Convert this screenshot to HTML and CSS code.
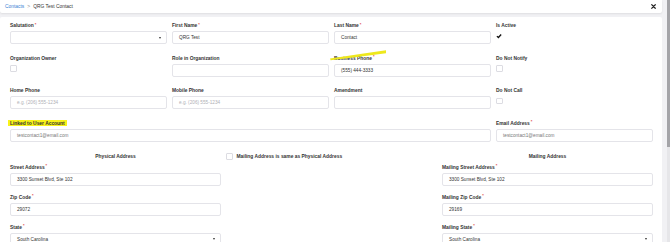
FILE: index.html
```html
<!DOCTYPE html>
<html lang="en">
<head>
    <meta charset="UTF-8">
    <meta name="viewport" content="width=device-width, initial-scale=1.0">
    <title>QRG Test Contact</title>
    <link rel="stylesheet" href="styles.css">
</head>
<body>

<div class="app">
    <main class="page">
        <header class="topbar">
            <nav class="crumbs">
                <a href="#">Contacts</a>
                <span class="sep">&gt;</span>
                <span>QRG Test Contact</span>
            </nav>
            <button class="close" type="button" aria-label="Close">
                <svg viewBox="0 0 10 10" width="5" height="5"><path d="M1.5 1.5 L8.5 8.5 M8.5 1.5 L1.5 8.5" stroke="#222" stroke-width="2.4" stroke-linecap="square"/></svg>
            </button>
        </header>

        <section class="card">
            <div class="grid4">
                <div class="field">
                    <label>Salutation<sup>*</sup></label>
                    <div class="input select"><span></span><i class="caret"></i></div>
                </div>
                <div class="field">
                    <label>First Name<sup>*</sup></label>
                    <div class="input">QRG Test</div>
                </div>
                <div class="field">
                    <label>Last Name<sup>*</sup></label>
                    <div class="input">Contact</div>
                </div>
                <div class="field">
                    <label>Is Active</label>
                    <span class="check checked">
                        <svg viewBox="0 0 10 10" width="6" height="6"><path d="M1.5 5.2 L4 7.6 L8.6 2.6" fill="none" stroke="#111" stroke-width="2.2"/></svg>
                    </span>
                </div>

                <div class="field">
                    <label>Organization Owner</label>
                    <span class="check"></span>
                </div>
                <div class="field">
                    <label>Role in Organization</label>
                    <div class="input"></div>
                </div>
                <div class="field">
                    <label>Business Phone<sup>*</sup></label>
                    <div class="input">(555) 444-3333</div>
                </div>
                <div class="field">
                    <label>Do Not Notify</label>
                    <span class="check"></span>
                </div>

                <div class="field">
                    <label>Home Phone</label>
                    <div class="input placeholder">e.g. (206) 555-1234</div>
                </div>
                <div class="field">
                    <label>Mobile Phone</label>
                    <div class="input placeholder">e.g. (206) 555-1234</div>
                </div>
                <div class="field">
                    <label>Amendment</label>
                    <div class="input"></div>
                </div>
                <div class="field">
                    <label>Do Not Call</label>
                    <span class="check"></span>
                </div>

                <div class="field wide">
                    <label><mark>Linked to User Account</mark></label>
                    <div class="input muted">testcontact1@email.com</div>
                </div>
                <div class="field">
                    <label>Email Address<sup>*</sup></label>
                    <div class="input muted">testcontact1@email.com</div>
                </div>
            </div>

            <div class="addr-head">
                <h3>Physical Address</h3>
                <div class="same">
                    <span class="check"></span>
                    <span>Mailing Address is same as Physical Address</span>
                </div>
                <h3>Mailing Address</h3>
            </div>

            <div class="addr">
                <div class="field col-left">
                    <label>Street Address<sup>*</sup></label>
                    <div class="input">3300 Sunset Blvd, Ste 102</div>
                </div>
                <div class="field col-right">
                    <label>Mailing Street Address<sup>*</sup></label>
                    <div class="input">3300 Sunset Blvd, Ste 102</div>
                </div>
                <div class="field col-left">
                    <label>Zip Code<sup>*</sup></label>
                    <div class="input">29072</div>
                </div>
                <div class="field col-right">
                    <label>Mailing Zip Code<sup>*</sup></label>
                    <div class="input">29169</div>
                </div>
                <div class="field col-left">
                    <label>State<sup>*</sup></label>
                    <div class="input select"><span>South Carolina</span><i class="caret"></i></div>
                </div>
                <div class="field col-right">
                    <label>Mailing State<sup>*</sup></label>
                    <div class="input select"><span>South Carolina</span><i class="caret"></i></div>
                </div>
            </div>
        </section>
    </main>

    <div class="scrollbar"><div class="thumb"></div></div>
</div>

<!-- highlighter stroke drawn over the Business Phone label -->
<svg class="marker" width="70" height="16" viewBox="0 0 70 16">
    <path d="M2 10.5 Q28 6.5 58 2.2 L58 5.2 Q30 9 2.6 12.2 Z" fill="#eee81c"/>
</svg>

</body>
</html>
```

FILE: styles.css
```css
body {
    margin: 0;
    padding: 0;
    background-color: #f1f1f4;
    font-family: "Liberation Sans", Arial, sans-serif;
    color: #333;
    overflow: hidden;
}

.app {
    display: flex;
    height: 242px;
    overflow: hidden;
}

.page {
    width: 662px;
    display: flex;
    flex-direction: column;
    gap: 4px;
}

.topbar {
    flex-shrink: 0;
    height: 13px;
    background-color: white;
    border-radius: 0 0 2px 2px;
    box-shadow: 0 1px 2px rgba(0, 0, 0, 0.08);
    display: flex;
    align-items: center;
    justify-content: space-between;
    padding: 0 6px 0 5px;
}

.crumbs {
    font-size: 4.9px;
    display: flex;
    gap: 3px;
    color: #333;
}

.crumbs a {
    color: #3b7fd4;
    text-decoration: none;
}

.crumbs .sep {
    color: #888;
}

.close {
    border: none;
    background: none;
    padding: 0;
    display: flex;
}

.card {
    flex-shrink: 0;
    flex-grow: 1;
    background-color: white;
    border-radius: 2px 2px 0 0;
    padding: 5px 9px 10px 10px;
}

.grid4 {
    display: grid;
    grid-template-columns: repeat(4, 1fr);
    column-gap: 5px;
    row-gap: 10.5px;
}

.field label {
    display: block;
    font-size: 4.9px;
    font-weight: bold;
    line-height: 7px;
    height: 7px;
    margin-bottom: 2px;
    color: #333;
    white-space: nowrap;
}

.field sup {
    color: #e04848;
    font-size: 4px;
    line-height: 0;
    margin-left: 1px;
    vertical-align: 1.5px;
}

.field mark {
    background-color: #f8f21a;
    color: #333;
    padding: 0.5px 2px;
    margin-left: -2px;
}

.field.wide {
    grid-column: span 3;
}

.input {
    box-sizing: border-box;
    height: 13px;
    border: 1px solid #e4e4e9;
    border-radius: 2px;
    background-color: white;
    padding: 0 6px;
    font-size: 4.7px;
    line-height: 11px;
    color: #333;
    white-space: nowrap;
}

.input.placeholder {
    color: #b0b0b6;
}

.input.muted {
    color: #777;
}

.select {
    display: flex;
    justify-content: space-between;
    align-items: center;
    padding-right: 5px;
}

.caret {
    width: 0;
    height: 0;
    border-left: 1.5px solid transparent;
    border-right: 1.5px solid transparent;
    border-top: 2px solid #333;
}

.check {
    display: flex;
    align-items: center;
    justify-content: center;
    box-sizing: border-box;
    width: 6.5px;
    height: 6.5px;
    margin-top: 3.5px;
    border: 1px solid #dcdce2;
    border-radius: 1px;
    background-color: white;
}

.check.checked {
    border: none;
}

.addr-head {
    display: grid;
    grid-template-columns: repeat(3, 1fr);
    column-gap: 5px;
    margin-top: 11.5px;
    height: 7px;
    align-items: center;
}

.addr-head h3 {
    margin: 0;
    font-size: 4.9px;
    font-weight: bold;
    text-align: center;
    color: #333;
}

.same {
    display: flex;
    align-items: center;
    gap: 4px;
    font-size: 4.9px;
    font-weight: bold;
}

.same .check {
    margin-top: 0;
}

.addr {
    display: grid;
    grid-template-columns: repeat(3, 1fr);
    column-gap: 5px;
    row-gap: 8px;
    margin-top: 3.5px;
}

.col-left {
    grid-column: 1;
}

.col-right {
    grid-column: 3;
}

.scrollbar {
    width: 3px;
    margin-left: auto;
    background-color: #e6e6e9;
}

.thumb {
    height: 147px;
    background-color: #a4a4a8;
}

.marker {
    position: absolute;
    left: 328px;
    top: 48px;
}
```
